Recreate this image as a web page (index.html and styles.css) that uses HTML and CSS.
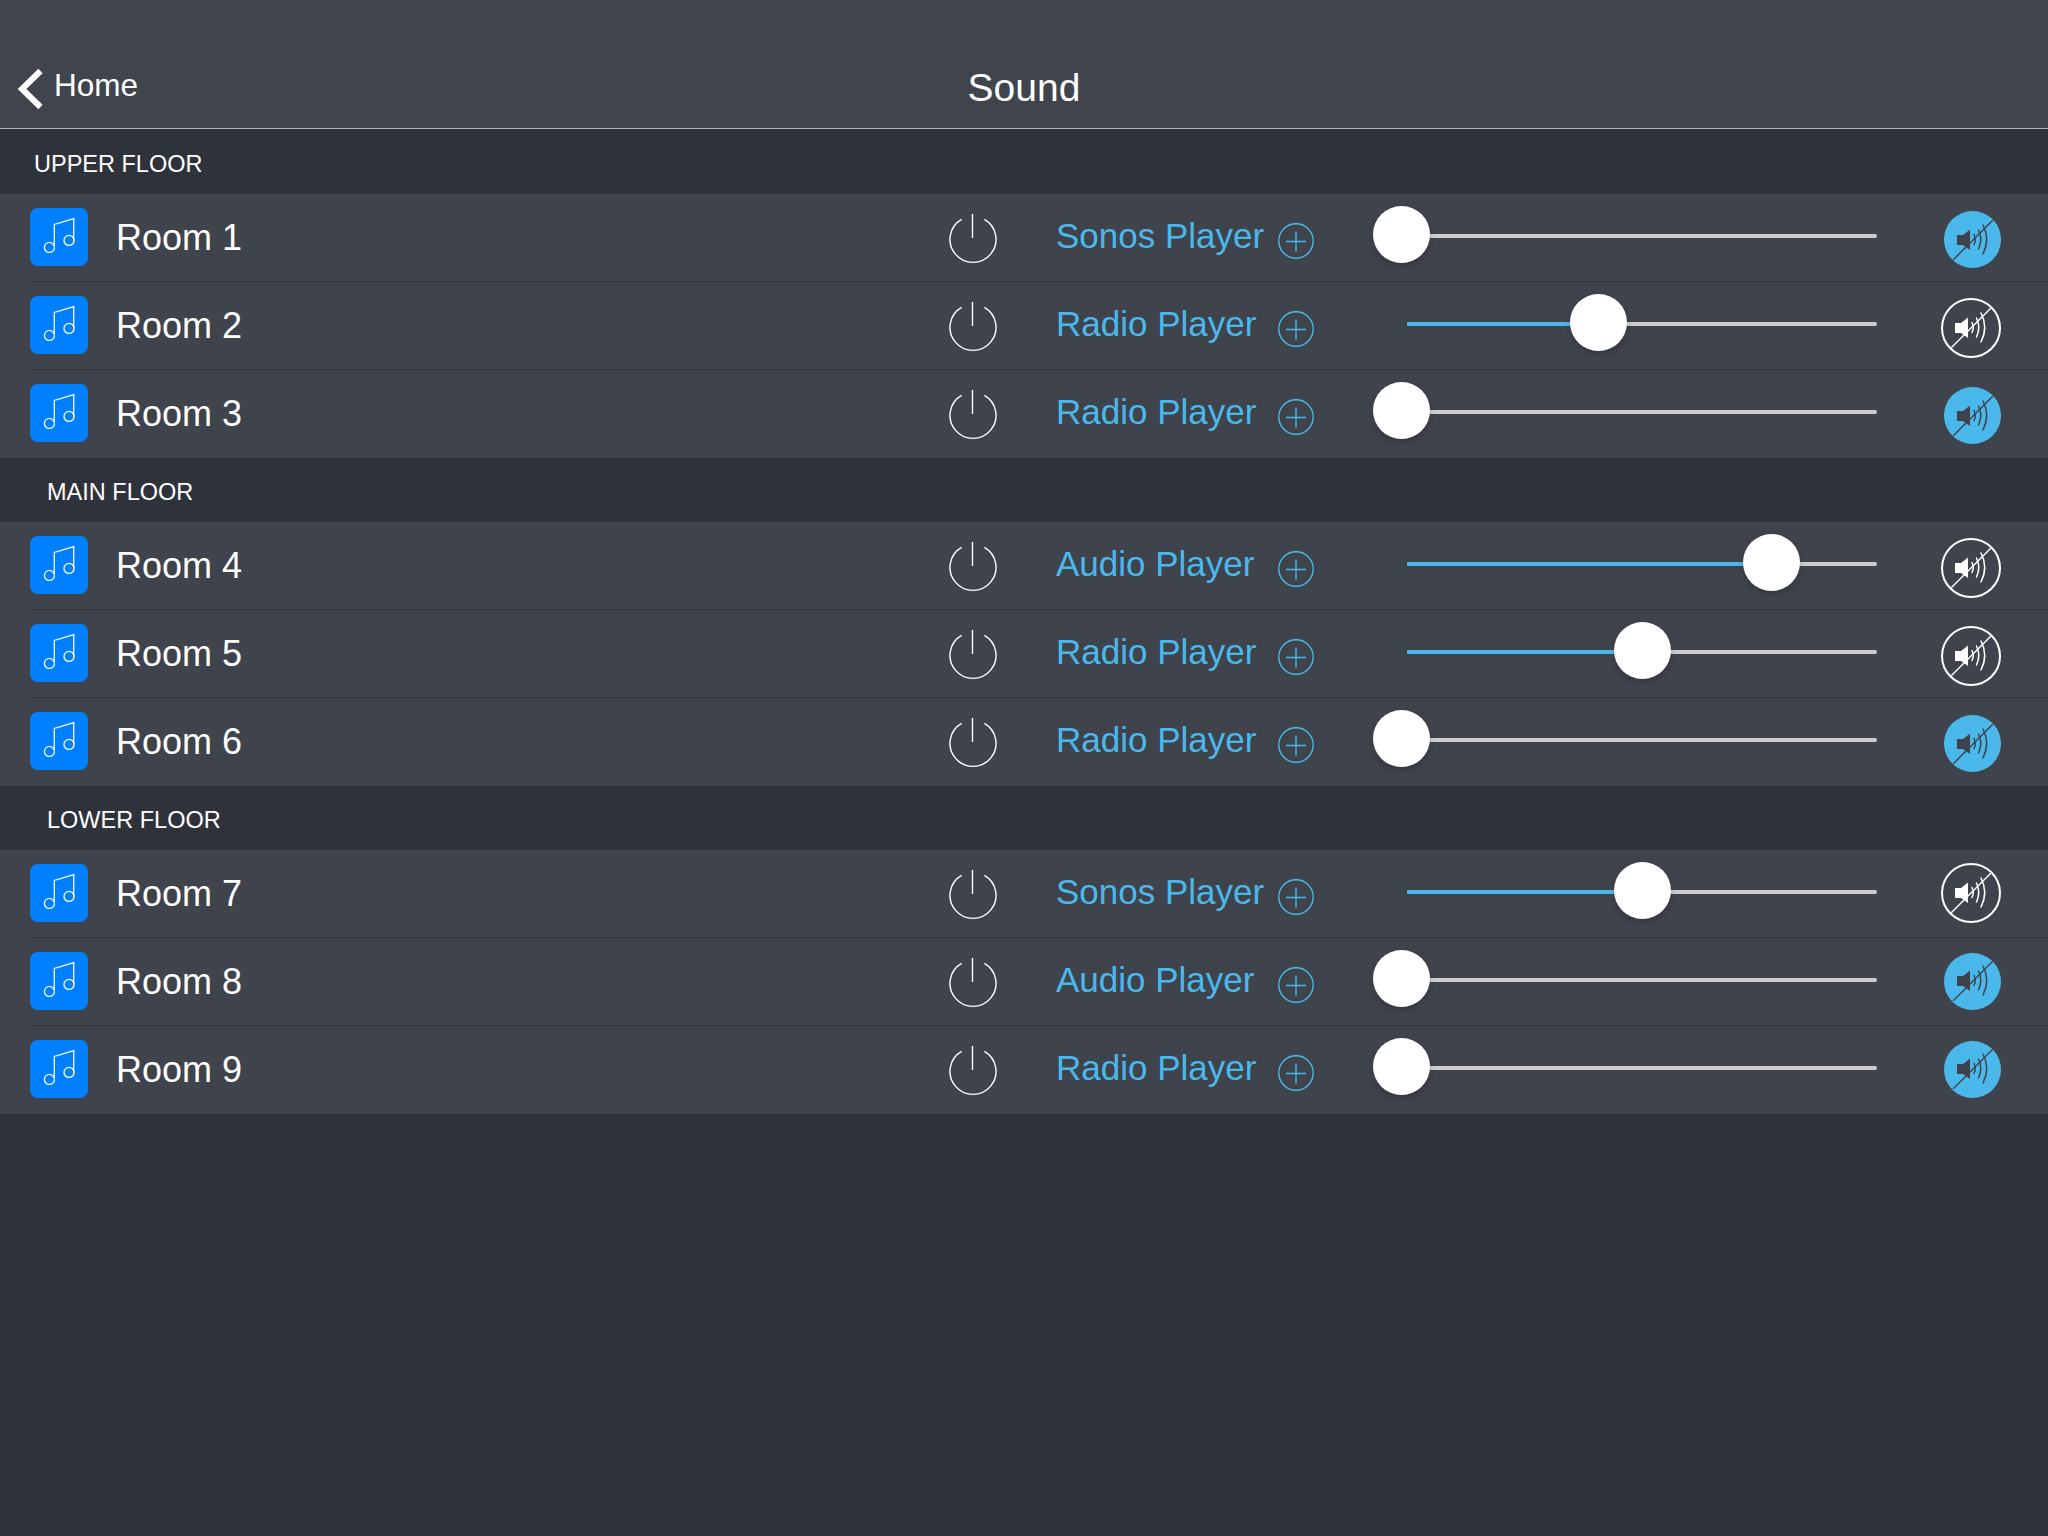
FILE: index.html
```html
<!DOCTYPE html>
<html lang="en">
<head>
<meta charset="utf-8">
<title>Sound</title>
<link rel="stylesheet" href="styles.css">
</head>
<body>
<svg class="defs" width="0" height="0" aria-hidden="true">
  <symbol id="i-music" viewBox="0 0 58 58"><g fill="none" stroke="#fff" stroke-width="1.3"><circle cx="19.4" cy="39.4" r="5"/><circle cx="39" cy="32.4" r="5"/><path d="M24.3 38V16.5L43.7 10.7V32.4"/></g></symbol>
  <symbol id="i-power" viewBox="0 0 48 50"><g fill="none" stroke="#fff" stroke-width="1.4"><path d="M12.6 5.4A23 23 0 1 0 35.4 5.4"/><path d="M23.5 0V24"/></g></symbol>
  <symbol id="i-plus" viewBox="0 0 36 36"><g fill="none" stroke="currentColor" stroke-width="1.4"><circle cx="18" cy="18" r="17.2"/><path d="M8 18.5H28M18 8.5V28.5"/></g></symbol>
  <symbol id="i-speaker" viewBox="0 0 60 60"><path fill="currentColor" d="M14 25H20L27 19.5V40L20 35H14Z"/><g fill="none" stroke="currentColor" stroke-width="1.5" stroke-linecap="round"><path d="M31 24.5Q33.5 30 31 34.5"/><path d="M35.5 20Q40 29.5 35.5 39"/><path d="M40 15Q47.5 29.5 40 44"/></g><path fill="none" stroke="currentColor" stroke-width="1.4" d="M10 50L50 10"/></symbol>
</svg>

<header class="header">
  <a class="back">
    <svg class="chevron" viewBox="0 0 26 42"><path d="M23.5 3L5 21L23.5 39"/></svg>
    <span>Home</span>
  </a>
  <h1 class="title">Sound</h1>
</header>

<main>
  <h2 class="floor floor-first">UPPER FLOOR</h2>
  <ul class="rooms">
    <li class="room"><svg class="music"><use href="#i-music"/></svg><span class="name">Room 1</span><svg class="power"><use href="#i-power"/></svg><span class="player">Sonos Player</span><svg class="plus"><use href="#i-plus"/></svg><div class="slider"><i class="thumb" style="--v:-1.2%"></i></div><span class="mute on"><svg><use href="#i-speaker"/></svg></span></li>
    <li class="room"><svg class="music"><use href="#i-music"/></svg><span class="name">Room 2</span><svg class="power"><use href="#i-power"/></svg><span class="player">Radio Player</span><svg class="plus"><use href="#i-plus"/></svg><div class="slider"><b class="fill" style="--v:40.8%"></b><i class="thumb" style="--v:40.8%"></i></div><span class="mute"><svg><use href="#i-speaker"/></svg></span></li>
    <li class="room"><svg class="music"><use href="#i-music"/></svg><span class="name">Room 3</span><svg class="power"><use href="#i-power"/></svg><span class="player">Radio Player</span><svg class="plus"><use href="#i-plus"/></svg><div class="slider"><i class="thumb" style="--v:-1.2%"></i></div><span class="mute on"><svg><use href="#i-speaker"/></svg></span></li>
  </ul>
  <h2 class="floor">MAIN FLOOR</h2>
  <ul class="rooms">
    <li class="room"><svg class="music"><use href="#i-music"/></svg><span class="name">Room 4</span><svg class="power"><use href="#i-power"/></svg><span class="player">Audio Player</span><svg class="plus"><use href="#i-plus"/></svg><div class="slider"><b class="fill" style="--v:77.6%"></b><i class="thumb" style="--v:77.6%"></i></div><span class="mute"><svg><use href="#i-speaker"/></svg></span></li>
    <li class="room"><svg class="music"><use href="#i-music"/></svg><span class="name">Room 5</span><svg class="power"><use href="#i-power"/></svg><span class="player">Radio Player</span><svg class="plus"><use href="#i-plus"/></svg><div class="slider"><b class="fill" style="--v:50%"></b><i class="thumb" style="--v:50%"></i></div><span class="mute"><svg><use href="#i-speaker"/></svg></span></li>
    <li class="room"><svg class="music"><use href="#i-music"/></svg><span class="name">Room 6</span><svg class="power"><use href="#i-power"/></svg><span class="player">Radio Player</span><svg class="plus"><use href="#i-plus"/></svg><div class="slider"><i class="thumb" style="--v:-1.2%"></i></div><span class="mute on"><svg><use href="#i-speaker"/></svg></span></li>
  </ul>
  <h2 class="floor">LOWER FLOOR</h2>
  <ul class="rooms rooms-lower">
    <li class="room"><svg class="music"><use href="#i-music"/></svg><span class="name">Room 7</span><svg class="power"><use href="#i-power"/></svg><span class="player">Sonos Player</span><svg class="plus"><use href="#i-plus"/></svg><div class="slider"><b class="fill" style="--v:50%"></b><i class="thumb" style="--v:50%"></i></div><span class="mute"><svg><use href="#i-speaker"/></svg></span></li>
    <li class="room"><svg class="music"><use href="#i-music"/></svg><span class="name">Room 8</span><svg class="power"><use href="#i-power"/></svg><span class="player">Audio Player</span><svg class="plus"><use href="#i-plus"/></svg><div class="slider"><i class="thumb" style="--v:-1.2%"></i></div><span class="mute on"><svg><use href="#i-speaker"/></svg></span></li>
    <li class="room"><svg class="music"><use href="#i-music"/></svg><span class="name">Room 9</span><svg class="power"><use href="#i-power"/></svg><span class="player">Radio Player</span><svg class="plus"><use href="#i-plus"/></svg><div class="slider"><i class="thumb" style="--v:-1.2%"></i></div><span class="mute on"><svg><use href="#i-speaker"/></svg></span></li>
  </ul>
</main>
</body>
</html>
```
FILE: styles.css
```css
* { box-sizing: border-box; }
html, body { height: 100%; }
body {
  margin: 0;
  background: #2e323a;
  color: #fff;
  font-family: "Liberation Sans", Arial, sans-serif;
}
.defs { position: absolute; }

.header {
  height: 129px;
  margin-bottom: 1px;
  background: #40444d;
  border-bottom: 1px solid #b4b6b9;
  display: grid;
  grid-template-columns: 1fr auto 1fr;
  align-items: end;
}
.back {
  display: flex;
  align-items: center;
  gap: 11px;
  padding: 0 0 18px 17px;
  font-size: 31.5px;
}
.back span { margin-top: -8px; }
.chevron { width: 26px; height: 42px; fill: none; stroke: #fff; stroke-width: 6; }
.title {
  margin: 0;
  padding-bottom: 18px;
  font-size: 39px;
  font-weight: 400;
  line-height: 44px;
}

.floor {
  margin: 0;
  height: 64px;
  padding-left: 47px;
  padding-top: 5px;
  display: flex;
  align-items: center;
  font-size: 23.5px;
  font-weight: 400;
}
.floor-first { padding-left: 34px; padding-top: 4px; }

.rooms { margin: 0; padding: 0; list-style: none; background: #3f434c; }
.room {
  height: 88px;
  margin-left: 30px;
  border-bottom: 1px solid #2f333b;
  display: grid;
  grid-template-columns: 87px 831px 108px 222px 95px 504px 124px;
  align-items: center;
}
.room:last-child { border-bottom-color: transparent; }

.music {
  width: 58px;
  height: 58px;
  background: #007fff;
  border-radius: 8px;
  margin-top: -2px;
}
.name { font-size: 36px; margin-left: -1px; margin-top: 1px; }
.power { width: 48px; height: 50px; margin-left: 1px; margin-top: 2px; }
.player { font-size: 35px; color: #4bb8ec; margin-top: -4px; }
.plus { width: 36px; height: 36px; color: #4bb8ec; margin-top: 7px; }

.slider {
  position: relative;
  width: 470px;
  height: 4px;
  margin-left: 34px;
  margin-top: -3px;
  background: #ccc;
  border-radius: 2px;
}
.fill {
  position: absolute;
  left: 0;
  top: 0;
  bottom: 0;
  width: var(--v);
  background: #4bb8ec;
  border-radius: 2px;
}
.thumb {
  position: absolute;
  left: var(--v);
  top: -28px;
  width: 57px;
  height: 57px;
  margin-left: -28.5px;
  background: #fff;
  border-radius: 50%;
  box-shadow: 0 3px 6px rgba(0, 0, 0, .2);
}

.mute {
  width: 60px;
  height: 60px;
  margin-left: 64px;
  margin-top: 4px;
  border-radius: 50%;
  border: 2px solid #fff;
  color: #fff;
  display: flex;
  align-items: center;
  justify-content: center;
}
.mute svg { width: 60px; height: 60px; flex: none; }
.mute.on {
  border: 0;
  width: 57px;
  height: 57px;
  margin-left: 67px;
  background: #4bb8ec;
  color: #3f434c;
}
.rooms-lower .mute { margin-top: -1px; }
```
